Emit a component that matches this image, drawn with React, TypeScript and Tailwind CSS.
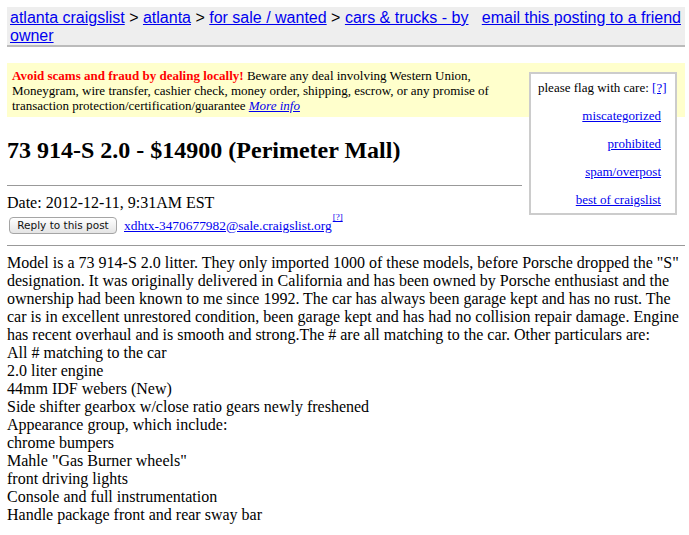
const link = "text-[#0000ee] underline";

function FlagBox() {
  return (
    <div className="float-right mr-[8px] mt-[4px] flex w-[148px] flex-col gap-[13px] border-2 border-[#cccccc] bg-white pb-[6px] pl-[7px] pr-[14px] pt-[6px] text-[13px] leading-[15px]">
      <div className="whitespace-nowrap">
        please flag with care: <a className={link}>[?]</a>
      </div>
      <a className={`${link} self-end`}>miscategorized</a>
      <a className={`${link} self-end`}>prohibited</a>
      <a className={`${link} self-end`}>spam/overpost</a>
      <a className={`${link} self-end`}>best of craigslist</a>
    </div>
  )
}

export default function App() {
  return (
    <div className="min-h-[535px] bg-white pl-[7px] pr-[4px] pt-[7px] font-['Liberation_Serif','Times_New_Roman',serif] text-black">
      <div className="flex justify-between border-b-2 border-[#bbbbbb] bg-[#eeeeee] pl-[3px] pr-[4px] pt-[2px] font-['Liberation_Sans',Arial,sans-serif] text-[16px] leading-[18px]">
        <div className="min-w-0 flex-1 whitespace-nowrap">
          <a className={link}>atlanta craigslist</a> &gt; <a className={link}>atlanta</a> &gt;{" "}
          <a className={link}>for sale / wanted</a> &gt;{" "}
          <a className={link}>
            cars &amp; trucks - by
            <br />
            owner
          </a>
        </div>
        <a className={`${link} shrink-0`}>email this posting to a friend</a>
      </div>

      <div className="mt-[16px] bg-[#ffffcc] pb-[4px] pl-[5px] pt-[5px] text-[13px] leading-[15px]">
        <FlagBox />
        <span className="font-bold text-[#ff0000]">Avoid scams and fraud by dealing locally!</span> Beware any deal
        involving Western Union,
        <br />
        Moneygram, wire transfer, cashier check, money order, shipping, escrow, or any promise of
        <br />
        transaction protection/certification/guarantee <a className={`${link} italic`}>More info</a>
      </div>

      <h2 className="mt-[19px] text-[24px] font-bold leading-[28px]">73 914-S 2.0 - $14900 (Perimeter Mall)</h2>

      <div className="mt-[21px] w-[515px] border-t border-[#999999]" />

      <div className="mt-[8px] text-[16px] leading-[18px]">Date: 2012-12-11, 9:31AM EST</div>

      <div className="mt-[4px] flex h-[18px] items-center">
        <button className="ml-[2px] flex h-[17px] w-[108px] items-center justify-center rounded-[4px] border border-[#a5a5a5] bg-linear-to-b from-white to-[#e4e4e4] font-['DejaVu_Sans',Verdana,sans-serif] text-[10.5px] leading-none text-[#111]">
          Reply to this post
        </button>
        <a className={`${link} ml-[7px] text-[13.4px] leading-[15px]`}>xdhtx-3470677982@sale.craigslist.org</a>
        <sup className="-mt-[6px] ml-[1px] text-[9px] leading-none">
          <a className={link}>[?]</a>
        </sup>
      </div>

      <div className="mt-[11px] border-t border-[#999999]" />

      <div className="mt-[8px] whitespace-nowrap text-[16px] leading-[18px]">
        Model is a 73 914-S 2.0 litter. They only imported 1000 of these models, before Porsche dropped the "S"
        <br />
        designation. It was originally delivered in California and has been owned by Porsche enthusiast and the
        <br />
        ownership had been known to me since 1992. The car has always been garage kept and has no rust. The
        <br />
        car is in excellent unrestored condition, been garage kept and has had no collision repair damage. Engine
        <br />
        has recent overhaul and is smooth and strong.The # are all matching to the car. Other particulars are:
        <br />
        All # matching to the car
        <br />
        2.0 liter engine
        <br />
        44mm IDF webers (New)
        <br />
        Side shifter gearbox w/close ratio gears newly freshened
        <br />
        Appearance group, which include:
        <br />
        chrome bumpers
        <br />
        Mahle "Gas Burner wheels"
        <br />
        front driving lights
        <br />
        Console and full instrumentation
        <br />
        Handle package front and rear sway bar
      </div>
    </div>
  )
}
